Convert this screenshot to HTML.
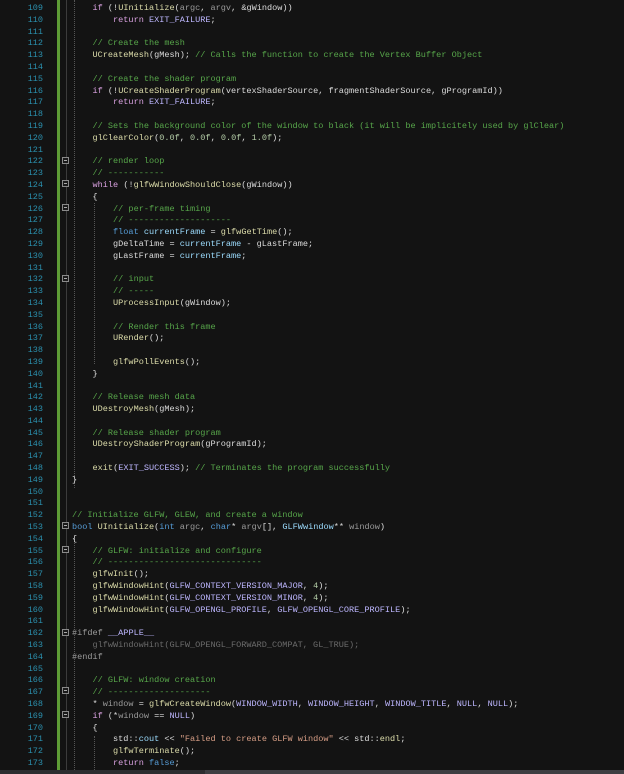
<!DOCTYPE html>
<html><head><meta charset="utf-8"><style>
html,body{margin:0;padding:0;background:#131313;width:624px;height:774px;overflow:hidden;position:relative}
#ln{position:absolute;left:0;top:3px;width:43px;text-align:right;font:8.5px/11.8px "Liberation Mono",monospace;color:#2b91af}
#code{position:absolute;left:72px;top:3px;margin:0;font:8.55px/11.8px "Liberation Mono",monospace;color:#dcdcdc;white-space:pre}
.c{color:#57a64a}.k{color:#569cd6}.f{color:#d8a0df}.fn{color:#dcdcaa}.v{color:#9cdcfe}.m{color:#beb7ff}.s{color:#d69d85}.n{color:#b5cea8}.p{color:#9a9a9a}.g{color:#6b6b6b}.pp{color:#9b9b9b}
#bar{position:absolute;left:57px;top:0;width:3px;height:770px;background:#5e9c36}
#gl{position:absolute;left:66px;top:0;width:1px;height:770px;background:#3c3c3c}
.box{position:absolute;left:62px;width:5px;height:5px;border:1px solid #8a8a8a;background:#1a1a1a}
.box:after{content:"";position:absolute;left:1px;top:2px;width:3px;height:1px;background:#aaa}
.dg{position:absolute;width:0;border-left:1px dotted #555}
#st{position:absolute;left:0;top:770px;width:624px;height:4px;background:#2d2d30}
#sc{position:absolute;left:205px;top:770px;width:419px;height:4px;background:#3e3e42}
</style></head><body>
<div id="bar"></div><div id="gl"></div>
<div class="dg" style="left:74px;top:0;height:488px"></div>
<div class="dg" style="left:94px;top:203px;height:161px"></div>
<div class="dg" style="left:74px;top:538px;height:232px"></div>
<div class="dg" style="left:94px;top:736px;height:34px"></div>
<div class="box" style="top:157px"></div>
<div class="box" style="top:180px"></div>
<div class="box" style="top:204px"></div>
<div class="box" style="top:275px"></div>
<div class="box" style="top:522px"></div>
<div class="box" style="top:546px"></div>
<div class="box" style="top:629px"></div>
<div class="box" style="top:687px"></div>
<div class="box" style="top:711px"></div>
<div id="ln">109<br>110<br>111<br>112<br>113<br>114<br>115<br>116<br>117<br>118<br>119<br>120<br>121<br>122<br>123<br>124<br>125<br>126<br>127<br>128<br>129<br>130<br>131<br>132<br>133<br>134<br>135<br>136<br>137<br>138<br>139<br>140<br>141<br>142<br>143<br>144<br>145<br>146<br>147<br>148<br>149<br>150<br>151<br>152<br>153<br>154<br>155<br>156<br>157<br>158<br>159<br>160<br>161<br>162<br>163<br>164<br>165<br>166<br>167<br>168<br>169<br>170<br>171<br>172<br>173<br>174</div>
<pre id="code">    <span class="f">if</span> (!<span class="fn">UInitialize</span>(<span class="p">argc</span>, <span class="p">argv</span>, &amp;gWindow))
        <span class="f">return</span> <span class="m">EXIT_FAILURE</span>;

    <span class="c">// Create the mesh</span>
    <span class="fn">UCreateMesh</span>(gMesh); <span class="c">// Calls the function to create the Vertex Buffer Object</span>

    <span class="c">// Create the shader program</span>
    <span class="f">if</span> (!<span class="fn">UCreateShaderProgram</span>(vertexShaderSource, fragmentShaderSource, gProgramId))
        <span class="f">return</span> <span class="m">EXIT_FAILURE</span>;

    <span class="c">// Sets the background color of the window to black (it will be implicitely used by glClear)</span>
    <span class="fn">glClearColor</span>(<span class="n">0.0f</span>, <span class="n">0.0f</span>, <span class="n">0.0f</span>, <span class="n">1.0f</span>);

    <span class="c">// render loop</span>
    <span class="c">// -----------</span>
    <span class="f">while</span> (!<span class="fn">glfwWindowShouldClose</span>(gWindow))
    {
        <span class="c">// per-frame timing</span>
        <span class="c">// --------------------</span>
        <span class="k">float</span> <span class="v">currentFrame</span> = <span class="fn">glfwGetTime</span>();
        gDeltaTime = <span class="v">currentFrame</span> - gLastFrame;
        gLastFrame = <span class="v">currentFrame</span>;

        <span class="c">// input</span>
        <span class="c">// -----</span>
        <span class="fn">UProcessInput</span>(gWindow);

        <span class="c">// Render this frame</span>
        <span class="fn">URender</span>();

        <span class="fn">glfwPollEvents</span>();
    }

    <span class="c">// Release mesh data</span>
    <span class="fn">UDestroyMesh</span>(gMesh);

    <span class="c">// Release shader program</span>
    <span class="fn">UDestroyShaderProgram</span>(gProgramId);

    <span class="fn">exit</span>(<span class="m">EXIT_SUCCESS</span>); <span class="c">// Terminates the program successfully</span>
}


<span class="c">// Initialize GLFW, GLEW, and create a window</span>
<span class="k">bool</span> <span class="fn">UInitialize</span>(<span class="k">int</span> <span class="p">argc</span>, <span class="k">char</span>* <span class="p">argv</span>[], <span class="v">GLFWwindow</span>** <span class="p">window</span>)
{
    <span class="c">// GLFW: initialize and configure</span>
    <span class="c">// ------------------------------</span>
    <span class="fn">glfwInit</span>();
    <span class="fn">glfwWindowHint</span>(<span class="m">GLFW_CONTEXT_VERSION_MAJOR</span>, <span class="n">4</span>);
    <span class="fn">glfwWindowHint</span>(<span class="m">GLFW_CONTEXT_VERSION_MINOR</span>, <span class="n">4</span>);
    <span class="fn">glfwWindowHint</span>(<span class="m">GLFW_OPENGL_PROFILE</span>, <span class="m">GLFW_OPENGL_CORE_PROFILE</span>);

<span class="pp">#ifdef</span> <span class="m">__APPLE__</span>
<span class="g">    glfwWindowHint(GLFW_OPENGL_FORWARD_COMPAT, GL_TRUE);</span>
<span class="pp">#endif</span>

    <span class="c">// GLFW: window creation</span>
    <span class="c">// --------------------</span>
    * <span class="p">window</span> = <span class="fn">glfwCreateWindow</span>(<span class="m">WINDOW_WIDTH</span>, <span class="m">WINDOW_HEIGHT</span>, <span class="m">WINDOW_TITLE</span>, <span class="m">NULL</span>, <span class="m">NULL</span>);
    <span class="f">if</span> (*<span class="p">window</span> == <span class="m">NULL</span>)
    {
        std::<span class="v">cout</span> &lt;&lt; <span class="s">"Failed to create GLFW window"</span> &lt;&lt; std::<span class="fn">endl</span>;
        <span class="fn">glfwTerminate</span>();
        <span class="f">return</span> <span class="k">false</span>;
</pre>
<div id="st"></div><div id="sc"></div>
</body></html>
